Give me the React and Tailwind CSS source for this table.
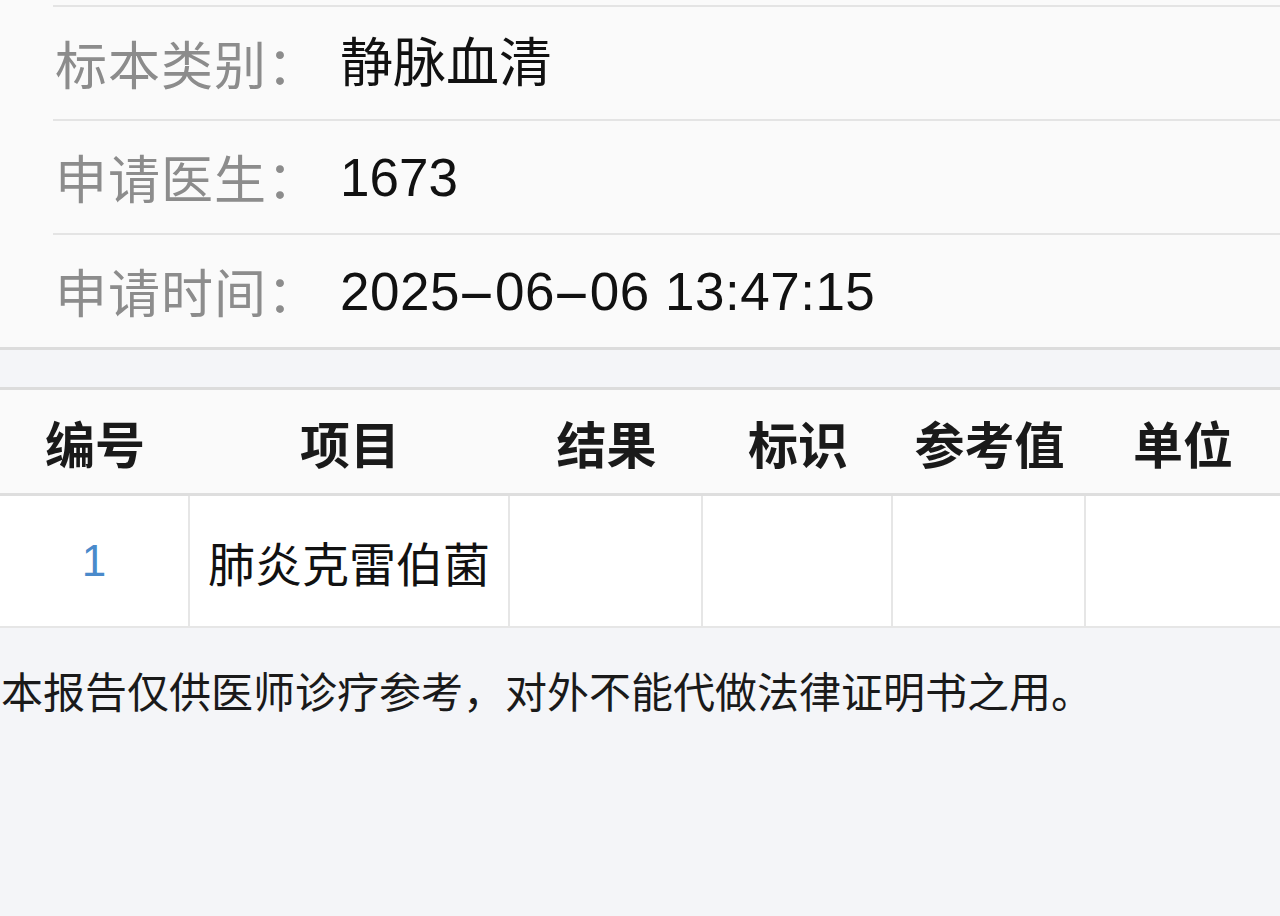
export default function App() {
  const font = { fontFamily: '"Liberation Sans", "Noto Sans CJK SC", sans-serif' };
  const cjk = { fontFamily: '"Noto Sans CJK SC", sans-serif' };
  const Dash = () => (
    <span className="inline-block w-[35px] text-center">
      <span className="inline-block scale-x-[2.2]">-</span>
    </span>
  );
  const rows = [
    ["标本类别", <span>静脉血清</span>],
    ["申请医生", <span>1673</span>],
    [
      "申请时间",
      <span className="tracking-[0.5px]">
        2025<Dash />06<Dash />06 13:47:15
      </span>,
    ],
  ];
  const heads = ["编号", "项目", "结果", "标识", "参考值", "单位"];
  const widths = ["w-[190px]", "w-[320px]", "w-[193px]", "w-[190px]", "w-[193px]", "flex-1"];
  return (
    <div className="w-[1280px] h-[916px] bg-[#f4f5f8] overflow-hidden" style={font}>
      <div className="bg-[#fafafa] border-b-[3px] border-[#dcdcdc]">
        <div className="pl-[53px]">
          <div className="h-[5px]" />
          {rows.map(([k, v]) => (
            <div key={k} className="h-[114px] border-t-2 border-[#e4e4e4] flex items-center pl-[2px]">
              <div className="w-[285px] text-[52px] leading-none text-[#8c8c8c] tracking-[1px]" style={cjk}>
                {k}：
              </div>
              <div className="text-[53px] leading-none text-[#111] whitespace-nowrap" style={font}>
                {v}
              </div>
            </div>
          ))}
        </div>
      </div>
      <div className="h-[37px]" />
      <div className="border-t-[3px] border-[#dcdcdc]">
        <div className="flex h-[106px] bg-[#fafafa] border-b-[3px] border-[#dedede]">
          {heads.map((h, i) => (
            <div key={h} className={`${widths[i]} flex items-center justify-center text-[50px] font-bold text-[#1a1a1a] leading-none`} style={cjk}>
              {h}
            </div>
          ))}
        </div>
        <div className="flex h-[132px] bg-white border-b-2 border-[#e6e6e6]">
          <div className="w-[190px] flex items-center justify-center text-[44px] text-[#4a8acb] leading-none border-r-2 border-[#e6e6e6]" style={font}>
            1
          </div>
          <div className="w-[320px] flex items-center justify-center text-[47px] text-[#111] leading-none border-r-2 border-[#e6e6e6]" style={cjk}>
            肺炎克雷伯菌
          </div>
          <div className="w-[193px] border-r-2 border-[#e6e6e6]" />
          <div className="w-[190px] border-r-2 border-[#e6e6e6]" />
          <div className="w-[193px] border-r-2 border-[#e6e6e6]" />
          <div className="flex-1" />
        </div>
      </div>
      <div className="pt-[41px] pl-[1px] text-[42px] leading-none text-[#1a1a1a] whitespace-nowrap" style={cjk}>
        本报告仅供医师诊疗参考，对外不能代做法律证明书之用。
      </div>
    </div>
  );
}
